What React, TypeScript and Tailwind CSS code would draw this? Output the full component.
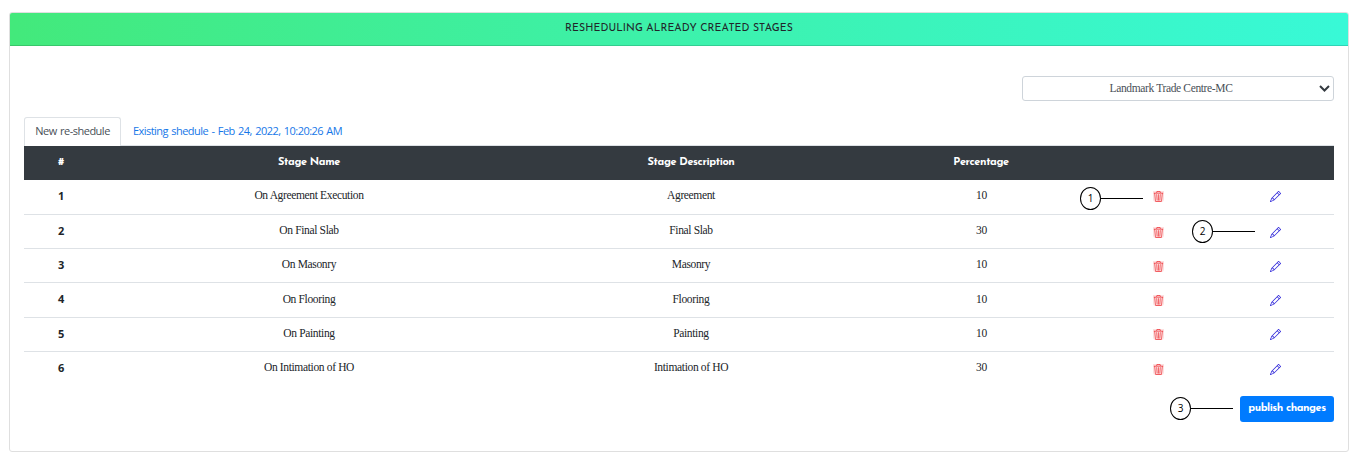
import React from "react";
import { BsPencil, BsTrash3 } from "react-icons/bs";

type Stage = { name: string; description: string; percentage: number };

const stages: Stage[] = [
  { name: "On Agreement Execution", description: "Agreement", percentage: 10 },
  { name: "On Final Slab", description: "Final Slab", percentage: 30 },
  { name: "On Masonry", description: "Masonry", percentage: 10 },
  { name: "On Flooring", description: "Flooring", percentage: 10 },
  { name: "On Painting", description: "Painting", percentage: 10 },
  { name: "On Intimation of HO", description: "Intimation of HO", percentage: 30 },
];

const columns = "grid grid-cols-[74px_422px_342px_238px_117px_117px] text-center";

function Callout({ label, place }: { label: string; place: string }) {
  return (
    <div className={`absolute flex items-center ${place}`}>
      <span className="flex h-[23px] w-[21px] items-center justify-center rounded-[50%] border border-black bg-white pb-px font-['Open_Sans',sans-serif] text-[10px] leading-none text-black">
        {label}
      </span>
      <span className="h-px w-[42px] bg-black" />
    </div>
  );
}

function StageRow({ stage, index }: { stage: Stage; index: number }) {
  return (
    <div
      className={`${columns} h-[34.25px] font-['Liberation_Serif',serif] text-[11.5px] leading-4 tracking-[-0.35px] text-[#212529] ${
        index > 0 ? "border-t border-[#dee2e6]" : ""
      }`}
    >
      <div className="pt-2 font-['Open_Sans',sans-serif] text-[11px] font-bold">{index + 1}</div>
      <div className="pt-[7.2px]">{stage.name}</div>
      <div className="pt-[7.2px]">{stage.description}</div>
      <div className="pl-px pt-[7.2px] tracking-[-0.2px]">{stage.percentage}</div>
      <div className="flex justify-center pt-[11.8px]">
        <BsTrash3 className="size-[11px] rounded-b-[3px] bg-[#ee3338]/15 text-[#ee3338]" />
      </div>
      <div className="flex justify-center pt-[11.8px]">
        <BsPencil className="size-[11px] text-[#2a22d8]" />
      </div>
    </div>
  );
}

export default function App() {
  return (
    <main className="relative h-[466px] w-[1360px] overflow-hidden bg-white pl-[9px] pt-3">
      <section className="flex h-[440px] w-[1340px] flex-col rounded-[3px] border border-[#dfdfdf]">
        <header className="flex h-[33px] items-start justify-center rounded-t-[2px] border-b border-black/15 bg-linear-to-r from-[#43e97b] to-[#38f9d7] pt-2 font-['Josefin_Sans','Lato',sans-serif] text-[10.5px] font-normal leading-4 tracking-[0.09px] text-[#212529]">
          RESHEDULING ALREADY CREATED STAGES
        </header>
        <div className="flex flex-col px-[14px] pt-[30px]">
          <div className="flex h-[25px] w-[312px] items-center self-end rounded-[3px] border border-[#ced4da] pr-[3px] font-['Liberation_Serif',serif] text-[11.5px] tracking-[-0.36px] text-[#495057]">
            <span className="flex-1 pt-px text-center">Landmark Trade Centre-MC</span>
            <svg className="h-[7px] w-[11px]" viewBox="0 0 11 7" fill="none" stroke="#343a40" strokeWidth="2">
              <path d="M1 1l4.5 4.5L10 1" />
            </svg>
          </div>
          <nav className="mt-4 flex h-[29px] border-b border-[#dee2e6] font-['Open_Sans',sans-serif] text-[11px] leading-4 tracking-[-0.54px] [word-spacing:1px]">
            <span className="-mb-px w-[97px] rounded-t-[3px] border border-b-0 border-[#dee2e6] bg-white pt-[5px] text-center tracking-[-0.5px] text-[#495057]">
              New re-shedule
            </span>
            <span className="pl-3 pt-[6px] text-[#1677e8]">Existing shedule - Feb 24, 2022, 10:20:26 AM</span>
          </nav>
          <div
            className={`${columns} h-[33.6px] bg-[#343a40] pt-[9px] font-['Josefin_Sans','Lato',sans-serif] text-[11px] font-black leading-4 tracking-[-0.4px] text-white`}
          >
            <span>#</span>
            <span>Stage Name</span>
            <span>Stage Description</span>
            <span>Percentage</span>
          </div>
          {stages.map((stage, index) => (
            <StageRow key={stage.name} stage={stage} index={index} />
          ))}
          <button className="mt-[11px] h-[26px] w-[94px] self-end rounded-[3px] bg-[#007bff] pt-px font-['Josefin_Sans','Lato',sans-serif] text-[11px] font-bold tracking-[-0.48px] text-white">
            publish changes
          </button>
        </div>
      </section>
      <Callout label="1" place="left-[1080px] top-[187px]" />
      <Callout label="2" place="left-[1192px] top-[220px]" />
      <Callout label="3" place="left-[1170px] top-[397px]" />
    </main>
  );
}
